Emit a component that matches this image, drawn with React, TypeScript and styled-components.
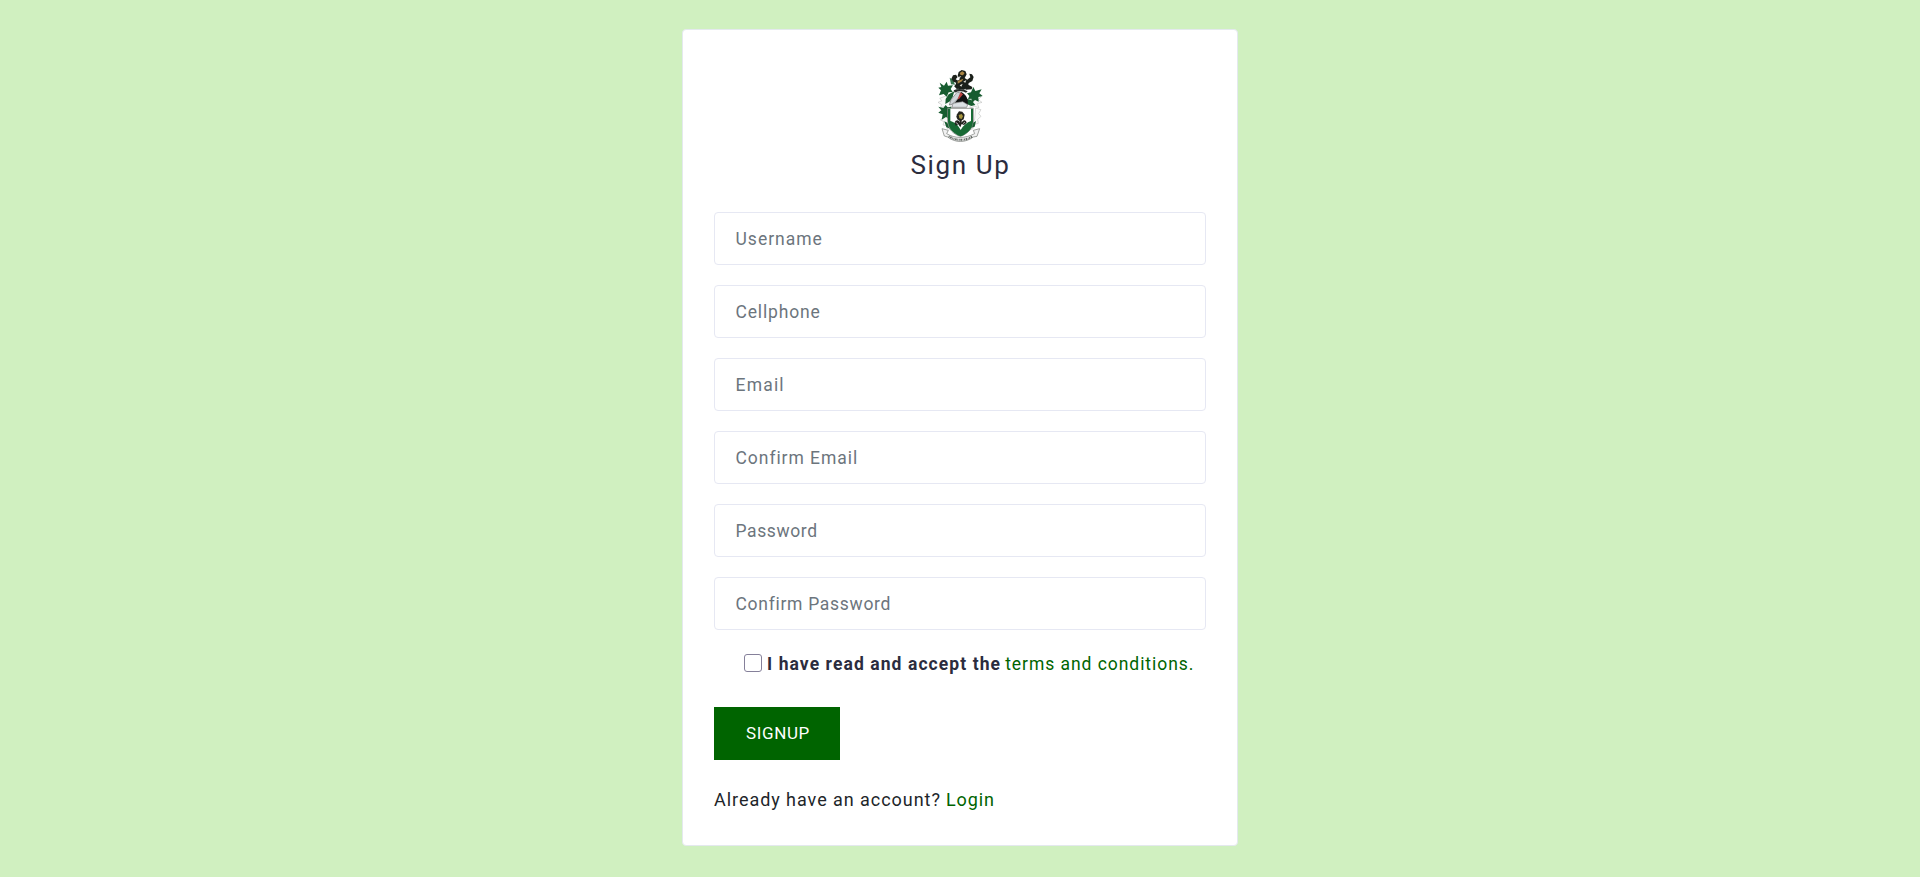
import React from "react";
import styled, { createGlobalStyle } from "styled-components";

const Global = createGlobalStyle`
  * { box-sizing: border-box; }
  body { margin: 0; background: #d0f0c0; font-family: Roboto, "Liberation Sans", sans-serif; }
`;
const Page = styled.main`
  min-height: 877px;
  padding-top: 29px;
  display: flex;
  justify-content: center;
  align-items: flex-start;
`;
const Card = styled.section`
  width: 556px;
  height: 817px;
  padding: 34px 31px 0;
  background: #fff;
  border: 1px solid #e4e9ee;
  border-radius: 4px;
  display: flex;
  flex-direction: column;
`;
const Crest = styled.svg`
  width: 60px;
  height: 84px;
  align-self: center;
  flex: none;
`;
const Title = styled.h1`
  margin: 0 0 30px;
  padding-left: 1px;
  height: 34px;
  text-align: center;
  font-size: 26px;
  line-height: 34px;
  font-weight: 400;
  color: #2b2c3e;
  letter-spacing: 1.6px;
`;
const Form = styled.form`
  display: flex;
  flex-direction: column;
  align-items: flex-start;
`;
const Field = styled.input<{ $ls: number }>`
  width: 100%;
  height: 53px;
  margin-bottom: 20px;
  padding: 1px 20.5px 0;
  border: 1px solid #e6e8f3;
  border-radius: 4px;
  font: 400 17.5px Roboto, "Liberation Sans", sans-serif;
  letter-spacing: ${(p) => p.$ls}px;
  &::placeholder { color: #6c757d; opacity: 1; }
`;
const Terms = styled.label`
  display: flex;
  align-items: center;
  height: 24px;
  margin: 2px 0 31px 30px;
  font-size: 17.5px;
  color: #2b2c3e;
  white-space: nowrap;
`;
const Check = styled.input`
  appearance: none;
  width: 18px;
  height: 18px;
  margin: 0 5px 2px 0;
  border: 1px solid #85809a;
  border-radius: 3px;
`;
const Words = styled.span<{ $ls: number; $bold?: boolean; $gap?: number }>`
  font-weight: ${(p) => (p.$bold ? 700 : 400)};
  letter-spacing: ${(p) => p.$ls}px;
  margin-right: ${(p) => p.$gap ?? 0}px;
`;
const Link = styled.a<{ $ls: number }>`
  color: #006400;
  text-decoration: none;
  letter-spacing: ${(p) => p.$ls}px;
`;
const Submit = styled.button`
  width: 126px;
  height: 53px;
  border: 0;
  padding: 0 0 2px 2px;
  background: #006400;
  color: #fff;
  font: 400 17px Roboto, "Liberation Sans", sans-serif;
  letter-spacing: 0.6px;
`;
const Account = styled.p`
  margin: 27px 0 0;
  height: 26px;
  line-height: 26px;
  font-size: 18px;
  color: #212529;
  white-space: nowrap;
`;

const fields = [
  { label: "Username", ls: 1, type: "text" },
  { label: "Cellphone", ls: 0.85, type: "tel" },
  { label: "Email", ls: 1.2, type: "text" },
  { label: "Confirm Email", ls: 0.95, type: "text" },
  { label: "Password", ls: 0.6, type: "password" },
  { label: "Confirm Password", ls: 0.71, type: "password" },
];

const Logo = () => (
  <Crest viewBox="3 0 180 252">
    <g fill="#f8f9f8" stroke="#b4b7b4" strokeWidth="1.5">
      <path d="M62 92l-14 5-16 6 7 7-12 5 11 7-4 9 16-3 12 7 7-18z" />
      <path d="M124 92l12-13 4 14 17 5-9 9 11 8-14 4 5 12-13-4-14 5z" />
      <path d="M44 158l-10 10 11 5-3 10 12 2 1 9 14 3-14-40zM140 132l16 5-7 12 7 8-10 9 2 12-12 3-5 14-12 4 18-34z" />
    </g>
    <g fill="#175c30">
      <path d="M32 56l13 9 8-12 4 12 15-1-7 11 6 9-12 1-6 13-9-8-14 4 6-15-8-8 9-2z" />
      <path d="M114 88l12-3 7-16 6 12 19-5-7 12 10 8-13 3 1 14-11-5-9 9-2-13-10 1 4-9z" />
      <path d="M28 128l15 4 7-9 6 7 12-2-4 13 8 11-12-1 4 16-13-8-13 8 3-16-13-5 9-7z" />
      <path d="M59 91l17-9-5 17-8 13-14 8 1-15zM112 104l15 4 12 15-12 3-12-5z" />
      <path d="M46 172l9 4 10 18-13-4zM141 171l-9 5-9 17 14-5z" />
      <path d="M66 61l-4-20 10 6 6 15z" fill="#36724b" />
    </g>
    <g fill="#1b201a">
      <path d="M89 24l9-6 11 3 4 10-6 11 12 8-1 18-13 9-19-3-8-9 5-12 10-8-7-10z" />
      <path d="M72 34l9-2 5 7-6 7 10 6-5 6-12-5-6-9zM113 49l11-9-3-11 8 2 5 8-4 12-12 7zM75 66l13-7 7 8-11 9zM106 66l13-3 11 6-2 7-18 1z" />
    </g>
    <path d="M92 27l8-5 7 5-5 7-7-1zM86 51l17-7-4 8-13 7z" fill="#aa8544" />
    <path d="M88 39l9-3-5 7zM103 53l9-5-3 8zM92 64l9-5-4 9z" fill="#e9e9e0" />
    <path d="M74 79q20-9 42 3l-5 4q-17-8-34 0z" fill="#272d29" />
    <path d="M85 84l12 4-9 15-17 17-10 3 5-16z" fill="#cfd4d8" stroke="#6b7070" strokeWidth="2" />
    <path d="M96 84c14 5 23 21 20 38l-15-9-24 4 12-15z" fill="#101313" />
    <path d="M94 85l8 6-10 12-7 4z" fill="#bd4542" />
    <path d="M72 118l29-5 15 9-3 8H69z" fill="#dce1e4" stroke="#777" strokeWidth="2" />
    <path d="M56 133h77v39c-1 23-20 39-39 45-20-6-38-22-38-45z" fill="#fff" stroke="#626862" strokeWidth="2" />
    <path d="M57 134h7v37c13 3 24 13 31 27 8-14 19-23 31-27v-37h6v39c0 20-18 37-37 44-20-7-38-24-38-44z" fill="#176a34" />
    <path d="M84 151l6-9 10 1 7 9-3 14-10 6-9-6-3-8z" fill="#25251e" />
    <path d="M89 153l9-3 4 7-4 8-7-2z" fill="#a6953d" />
    <path d="M77 176c3-10 13-9 15 0v-9h6v9c4-10 13-10 15 0l-8 7-7-3-4 10-6-9-8 4z" fill="#20231d" />
    <path d="M80 175l7 5m15-1l6-5" fill="none" stroke="#eee" strokeWidth="2" />
    <path d="M39 194l19 5-5 10c25 15 55 15 84 0l-4-10 19-5-8 23-11 2c-24 18-54 18-77 0l-10-3z" fill="#f1f1f1" stroke="#747874" strokeWidth="2" />
    <path d="M59 217c22 14 49 14 72 0" fill="none" stroke="#666c67" strokeWidth="6" strokeDasharray="3 2 5 2 2 2" />
  </Crest>
);

export default function App() {
  return (
    <Page>
      <Global />
      <Card>
        <Logo />
        <Title>Sign Up</Title>
        <Form>
          {fields.map((f) => (
            <Field key={f.label} type={f.type} placeholder={f.label} $ls={f.ls} />
          ))}
          <Terms>
            <Check type="checkbox" />
            <Words $bold $ls={1.08} $gap={4}>I have read and accept the</Words>
            <Link $ls={0.95} href="#">terms and conditions.</Link>
          </Terms>
          <Submit type="button">SIGNUP</Submit>
        </Form>
        <Account>
          <Words $ls={0.95} $gap={5}>Already have an account?</Words>
          <Link $ls={0.9} href="#">Login</Link>
        </Account>
      </Card>
    </Page>
  );
}
